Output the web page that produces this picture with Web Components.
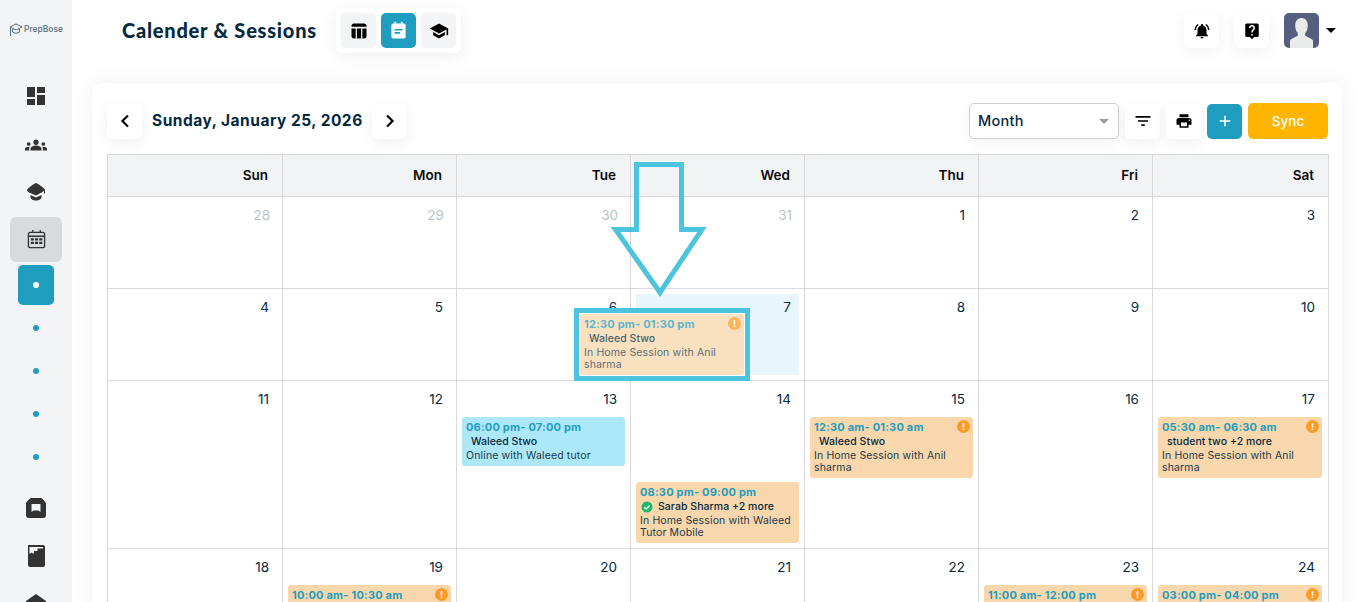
<!DOCTYPE html>
<html lang="en">
<head>
<meta charset="utf-8">
<title>Calender & Sessions</title>
<style>
  html, body { margin: 0; height: 100%; overflow: hidden; background: #fff; }
  body { font-family: Inter, "Liberation Sans", sans-serif; color: #05293f; }
</style>
</head>
<body>
<prep-app>
  <prep-sidebar slot="sidebar"></prep-sidebar>
  <prep-header slot="header" heading="Calender & Sessions"></prep-header>
  <cal-card slot="content">
    <cal-toolbar slot="toolbar" label="Sunday, January 25, 2026"></cal-toolbar>
    <cal-grid>
      <cal-day date="28" muted></cal-day><cal-day date="29" muted></cal-day><cal-day date="30" muted></cal-day><cal-day date="31" muted></cal-day><cal-day date="1"></cal-day><cal-day date="2"></cal-day><cal-day date="3"></cal-day>
      <cal-day date="4"></cal-day><cal-day date="5"></cal-day><cal-day date="6"></cal-day><cal-day date="7" today></cal-day><cal-day date="8"></cal-day><cal-day date="9"></cal-day><cal-day date="10"></cal-day>
      <cal-day date="11"></cal-day><cal-day date="12"></cal-day>
      <cal-day date="13"><cal-event time="06:00 pm- 07:00 pm" who="Waleed Stwo" kind="online">Online with Waleed tutor</cal-event></cal-day>
      <cal-day date="14"><cal-event style="margin-top:70px" time="08:30 pm- 09:00 pm" who="Sarab Sharma +2 more" status="ok">In Home Session with Waleed Tutor Mobile</cal-event></cal-day>
      <cal-day date="15"><cal-event time="12:30 am- 01:30 am" who="Waleed Stwo" status="warn">In Home Session with Anil sharma</cal-event></cal-day>
      <cal-day date="16"></cal-day>
      <cal-day date="17"><cal-event style="margin-right:1px" time="05:30 am- 06:30 am" who="student two +2 more" status="warn">In Home Session with Anil sharma</cal-event></cal-day>
      <cal-day date="18"></cal-day>
      <cal-day date="19"><cal-event time="10:00 am- 10:30 am" who="" status="warn"></cal-event></cal-day>
      <cal-day date="20"></cal-day><cal-day date="21"></cal-day><cal-day date="22"></cal-day>
      <cal-day date="23"><cal-event time="11:00 am- 12:00 pm" who="" status="warn"></cal-event></cal-day>
      <cal-day date="24"><cal-event style="margin-right:1px" time="03:00 pm- 04:00 pm" who="" status="warn"></cal-event></cal-day>
    </cal-grid>
  </cal-card>
</prep-app>
<guide-overlay></guide-overlay>

<script>
const ICONS = {
  dashboard: '<path d="M3 13h8V3H3v10zm0 8h8v-6H3v6zm10 0h8V11h-8v10zm0-18v6h8V3h-8z"/>',
  groups: '<path transform="translate(0 1)" d="M12 12.75c1.63 0 3.07.39 4.24.9 1.08.48 1.76 1.56 1.76 2.73V18H6v-1.61c0-1.18.68-2.26 1.76-2.73 1.17-.52 2.61-.91 4.24-.91zM4 13c1.1 0 2-.9 2-2s-.9-2-2-2-2 .9-2 2 .9 2 2 2zm1.13 1.1c-.37-.06-.74-.1-1.13-.1-.99 0-1.93.21-2.78.58C.48 14.9 0 15.62 0 16.43V18h4.5v-1.61c0-.83.23-1.61.63-2.29zM20 13c1.1 0 2-.9 2-2s-.9-2-2-2-2 .9-2 2 .9 2 2 2zm4 3.43c0-.81-.48-1.53-1.22-1.85-.85-.37-1.79-.58-2.78-.58-.39 0-.76.04-1.13.1.4.68.63 1.46.63 2.29V18H24v-1.57zM12 6c1.66 0 3 1.34 3 3s-1.34 3-3 3-3-1.34-3-3 1.34-3 3-3z"/>',
  school: '<path d="M5 13.18v4L12 21l7-3.82v-4L12 17l-7-3.82zM12 3L1 9l11 6 9-4.91V17h2V9L12 3z"/>',
  cap: '<path d="M12 3c1 0 7.500 4.500 9 6.500v4h-1v-3l-1.500 1.500L12 15.500 5 12.500C3.500 11.500 3 10.500 3 10 3 8.500 11 3 12 3z"/><path d="M6.500 15l5.500 2.500 5.500-2.500v2c0 2-2.500 3.500-5.500 3.500S6.500 19 6.500 17z"/>',
  week: '<path d="M6 3h12a3 3 0 0 1 3 3v1H3V6a3 3 0 0 1 3-3zM3 9h5v12H6a3 3 0 0 1-3-3zm6.500 0h5v12h-5zM16 9h5v9a3 3 0 0 1-3 3h-2z"/>',
  note: '<path fill-rule="evenodd" d="M7 1h2v2h6V1h2v2h2a2 2 0 0 1 2 2v15a2 2 0 0 1-2 2H5a2 2 0 0 1-2-2V5a2 2 0 0 1 2-2h2zM7 10v2h10v-2zm0 4v2h7v-2z"/>',
  bell: '<path d="M7.58 4.08L6.15 2.65C3.75 4.48 2.17 7.3 2.03 10.5h2c.15-2.65 1.51-4.97 3.55-6.42zm12.39 6.42h2c-.15-3.2-1.73-6.02-4.12-7.85l-1.42 1.43c2.02 1.45 3.39 3.77 3.54 6.42zM18 11c0-3.07-1.64-5.64-4.5-6.32V4c0-.83-.67-1.5-1.5-1.5s-1.5.67-1.5 1.5v.68C7.63 5.36 6 7.92 6 11v5l-2 2v1h16v-1l-2-2v-5zm-6 11c.14 0 .27-.01.4-.04.65-.14 1.18-.58 1.44-1.18.1-.24.15-.5.15-.78h-4c.01 1.1.9 2 2.01 2z"/>',
  help: '<path d="M19 2H5c-1.11 0-2 .9-2 2v14c0 1.1.89 2 2 2h4l3 3 3-3h4c1.1 0 2-.9 2-2V4c0-1.1-.9-2-2-2zm-6 16h-2v-2h2v2zm2.07-7.75l-.9.92C13.45 11.9 13 12.5 13 14h-2v-.5c0-1.1.45-2.1 1.17-2.83l1.24-1.26c.37-.36.59-.86.59-1.41 0-1.1-.9-2-2-2s-2 .9-2 2H8c0-2.21 1.79-4 4-4s4 1.79 4 4c0 .88-.36 1.68-.93 2.25z"/>',
  filter: '<path d="M10 18h4v-2h-4v2zM3 6v2h18V6H3zm3 7h12v-2H6v2z"/>',
  print: '<path d="M19 8H5c-1.66 0-3 1.34-3 3v6h4v4h12v-4h4v-6c0-1.66-1.34-3-3-3zm-3 11H8v-5h8v5zm3-7c-.55 0-1-.45-1-1s.45-1 1-1 1 .45 1 1-.45 1-1 1zm-1-9H6v4h12V3z"/>',
  left: '<path d="M17 5.500L15 3.600 6.500 12l8.500 8.400 2-1.900L10.600 12z"/>',
  right: '<path d="M7 5.500L9 3.600 17.500 12 9 20.400l-2-1.900 6.400-6.500z"/>',
  plus: '<path d="M11 5h2v6h6v2h-6v6h-2v-6H5v-2h6z"/>',
  calendar: '<path fill-rule="evenodd" d="M7 1h1.500v2h7V1H17v2h2a3 3 0 0 1 3 3v13a3 3 0 0 1-3 3H5a3 3 0 0 1-3-3V6a3 3 0 0 1 3-3h2zM5 4.500A1.500 1.500 0 0 0 3.500 6v1.500h17V6A1.500 1.500 0 0 0 19 4.500zM3.500 9v10A1.500 1.500 0 0 0 5 20.500h14a1.500 1.500 0 0 0 1.500-1.500V9z"/><path d="M5.500 10.500h3.500v2.500H5.500zm4.800 0h3.500v2.500h-3.500zm4.800 0h3.500v2.500h-3.500zM5.500 14.500h3.500V17H5.500zm4.800 0h3.500V17h-3.500zm4.800 0h3.500V17h-3.500z"/>',
  box: '<path fill-rule="evenodd" d="M7 2h10c2 1 5 4 5 6v11a3 3 0 0 1-3 3H5a3 3 0 0 1-3-3V8c0-2 3-5 5-6zm.500 6v8l2-1.500h5l2 1.500V8z"/>',
  book: '<path fill-rule="evenodd" d="M4 1h15a2 2 0 0 1 2 2v18a2 2 0 0 1-2 2H6a2 2 0 0 1-2-2zm1.500 2v7l2-1.500 2 1.500 .5-3h3.500V4.500h5.500V3z"/>',
  house: '<path d="M12 2l10 7v13H2V9z"/>'
};

class AppIcon extends HTMLElement {
  connectedCallback() {
    const size = this.getAttribute('size') || 24;
    this.attachShadow({ mode: 'open' }).innerHTML = `
      <style>
        :host { display: inline-flex; width: ${size}px; height: ${size}px; }
        svg { width: 100%; height: 100%; fill: currentColor; display: block; }
      </style>
      <svg viewBox="0 0 24 24">${ICONS[this.getAttribute('name')] || ''}</svg>`;
  }
}

class IconButton extends HTMLElement {
  connectedCallback() {
    const bg = this.getAttribute('bg') || '#fff';
    const color = this.getAttribute('color') || '#000';
    const shadow = this.hasAttribute('flat') ? 'none' : '0 4px 14px rgba(0,0,0,.06)';
    this.attachShadow({ mode: 'open' }).innerHTML = `
      <style>
        :host {
          display: flex; align-items: center; justify-content: center;
          width: 35px; height: 35px; border-radius: 5px;
          background: ${bg}; color: ${color}; box-shadow: ${shadow}; flex: none;
        }
      </style>
      <app-icon name="${this.getAttribute('name')}" size="${this.getAttribute('size') || 20}"></app-icon>`;
  }
}

class PrepApp extends HTMLElement {
  constructor() {
    super();
    this.attachShadow({ mode: 'open' }).innerHTML = `
      <style>
        :host { display: flex; height: 100vh; overflow: hidden; }
        .side { width: 72px; flex: none; }
        .main { flex: 1; min-width: 0; display: flex; flex-direction: column; }
        .body { padding: 0 16px 0 20px; }
      </style>
      <div class="side"><slot name="sidebar"></slot></div>
      <div class="main">
        <slot name="header"></slot>
        <div class="body"><slot name="content"></slot></div>
      </div>`;
  }
}

class PrepSidebar extends HTMLElement {
  constructor() {
    super();
    const icon = (name, size, cls = '') => `<div class="row ${cls}"><app-icon name="${name}" size="${size}"></app-icon></div>`;
    this.attachShadow({ mode: 'open' }).innerHTML = `
      <style>
        :host {
          display: flex; flex-direction: column; align-items: center;
          height: 100vh; background: #f3f4f6; color: #333; overflow: hidden;
        }
        .logo {
          height: 72px; width: 100%; flex: none; padding-top: 22px; box-sizing: border-box;
          display: flex; justify-content: center; gap: 1px; color: #54707f;
          font: 500 8.5px Inter, sans-serif;
        }
        .logo svg { width: 14px; height: 16px; fill: none; stroke: #54707f; stroke-width: 1; }
        .logo span { line-height: 15px; }
        .row { width: 52px; height: 48px; flex: none; display: flex; align-items: center; justify-content: center; }
        .row.active { height: 45px; margin-top: 1px; background: #d9dadc; border-radius: 6px; }
        .row.gap { margin-top: 7px; }
        .sub {
          width: 36px; height: 40px; margin-top: 3px; flex: none; border-radius: 5px;
          display: flex; align-items: center; justify-content: center;
        }
        .sub i { width: 6px; height: 6px; border-radius: 50%; background: #1f9dbf; }
        .sub.on { background: #1f9dbf; }
        .sub.on i { background: #fff; }
      </style>
      <div class="logo">
        <svg viewBox="0 0 14 16"><path d="M1 5l6-3 6 3-6 3zM3.500 7v3c2 1.500 5 1.500 7 0V7M1.500 5.500V14"/></svg>
        <span>PrepBose</span>
      </div>
      ${icon('dashboard', 24)}${icon('groups', 22)}${icon('cap', 24)}${icon('calendar', 21, 'active')}
      <div class="sub on"><i></i></div>
      <div class="sub"><i></i></div><div class="sub"><i></i></div><div class="sub"><i></i></div><div class="sub"><i></i></div>
      ${icon('box', 24, 'gap')}${icon('book', 24)}${icon('house', 24)}`;
  }
}

class PrepHeader extends HTMLElement {
  connectedCallback() {
    this.attachShadow({ mode: 'open' }).innerHTML = `
      <style>
        :host { display: flex; align-items: flex-start; height: 83px; flex: none; padding-left: 50px; }
        h1 {
          margin: 0; width: 214px; flex: none; height: 61px;
          font: 900 20px/61px Lato, sans-serif; letter-spacing: .77px; color: #05293f;
        }
        .tabs {
          display: flex; gap: 5px; padding: 5px; margin-top: 8px; border-radius: 6px;
          background: #fff; box-shadow: 0 4px 16px rgba(0,0,0,.07);
        }
        .end { margin-left: auto; margin-top: 13px; margin-right: 22px; display: flex; align-items: center; gap: 15px; }
        .avatar { width: 35px; height: 35px; border-radius: 5px; background: #565f7f; overflow: hidden; }
        .avatar svg { display: block; width: 35px; height: 35px; }
        .user { display: flex; align-items: center; gap: 7px; }
        .caret { width: 0; height: 0; border: 5px solid transparent; border-top: 5px solid #000; border-bottom: 0; }
      </style>
      <h1>${this.getAttribute('heading').replace('&', '&amp;')}</h1>
      <div class="tabs">
        <icon-button name="week" bg="#f3f4f6" flat></icon-button>
        <icon-button name="note" size="19" bg="#1f9dbf" color="#fff" flat></icon-button>
        <icon-button name="school" bg="#f3f4f6" flat></icon-button>
      </div>
      <div class="end">
        <icon-button name="bell" size="18"></icon-button>
        <icon-button name="help" size="18"></icon-button>
        <div class="user">
          <div class="avatar"><svg viewBox="0 0 35 35"><path fill="#e8ebea" d="M17.500 5c3.900 0 6.300 3 6.300 7.500 0 3.300-1.100 6-2.600 7.600v2.400c1 1.300 5.800 2.500 7.800 5V35H6v-7.500c2-2.500 6.800-3.700 7.800-5v-2.400c-1.500-1.600-2.600-4.300-2.600-7.600C11.200 8 13.600 5 17.500 5z"/></svg></div>
          <span class="caret"></span>
        </div>
      </div>`;
  }
}

class CalCard extends HTMLElement {
  constructor() {
    super();
    this.attachShadow({ mode: 'open' }).innerHTML = `
      <style>
        :host {
          display: block; padding: 20px 14px 0 15px; border-radius: 10px; background: #fff;
          box-shadow: 0 0 24px rgba(0,0,0,.06); height: 600px; box-sizing: border-box;
        }
      </style>
      <slot name="toolbar"></slot>
      <slot></slot>`;
  }
}

class CalToolbar extends HTMLElement {
  connectedCallback() {
    this.attachShadow({ mode: 'open' }).innerHTML = `
      <style>
        :host { display: flex; align-items: center; height: 36px; margin-bottom: 15px; }
        h2 { margin: 0 10px; padding-bottom: 2px; font: 700 15.5px Inter, sans-serif; letter-spacing: .5px; color: #05293f; width: 210px; white-space: nowrap; }
        .right { margin-left: auto; display: flex; gap: 6px; align-items: center; }
        .select {
          width: 150px; height: 36px; box-sizing: border-box; padding: 0 8px; margin-right: 0;
          border: 1px solid #ccc; border-radius: 5px; display: flex; align-items: center; justify-content: space-between;
          font: 500 14.5px Inter, sans-serif; letter-spacing: .3px; color: #05293f; background: #fff;
          box-shadow: 0 4px 14px rgba(0,0,0,.05);
        }
        .select span { padding-bottom: 1px; }
        .select i { border: 5px solid transparent; border-top: 5px solid #999; border-bottom: 0; margin-right: 1px; }
        .sync {
          width: 80px; height: 36px; border-radius: 5px; background: #ffb400; color: #fff;
          display: flex; align-items: center; justify-content: center; font: 500 13.5px Inter, sans-serif;
        }
      </style>
      <icon-button name="left" size="18"></icon-button>
      <h2>${this.getAttribute('label')}</h2>
      <icon-button name="right" size="18"></icon-button>
      <div class="right">
        <div class="select"><span>Month</span><i></i></div>
        <icon-button name="filter" size="20"></icon-button>
        <icon-button name="print" size="18"></icon-button>
        <icon-button name="plus" size="18" bg="#1f9dbf" color="#fff" flat></icon-button>
        <div class="sync">Sync</div>
      </div>`;
  }
}

class CalGrid extends HTMLElement {
  constructor() {
    super();
    const days = ['Sun', 'Mon', 'Tue', 'Wed', 'Thu', 'Fri', 'Sat'];
    this.attachShadow({ mode: 'open' }).innerHTML = `
      <style>
        :host {
          display: grid;
          grid-template-columns: 175px repeat(5, 174px) 176px;
          grid-template-rows: 42px 92px 92px 168px 168px;
          border-left: 1px solid #d8d8dc; border-top: 1px solid #d8d8dc;
          width: 1222px; box-sizing: border-box;
        }
        .head {
          background: #f2f3f5; border-right: 1px solid #d8d8dc; border-bottom: 1px solid #d8d8dc;
          display: flex; align-items: center; justify-content: flex-end; padding: 0 14px 2px 0;
          font: 600 13.5px Inter, sans-serif; color: #0a0a0a;
        }
      </style>
      ${days.map(d => `<div class="head">${d}</div>`).join('')}
      <slot></slot>`;
  }
}

class CalDay extends HTMLElement {
  connectedCallback() {
    const muted = this.hasAttribute('muted');
    const today = this.hasAttribute('today');
    this.attachShadow({ mode: 'open' }).innerHTML = `
      <style>
        :host {
          display: block; box-sizing: border-box; min-width: 0;
          border-right: 1px solid #d8d8dc; border-bottom: 1px solid #d8d8dc;
          padding: 5px 5px 0;
        }
        .tint { height: 81px; background: ${today ? '#e8f5fb' : 'transparent'}; }
        .num {
          height: 26px; text-align: right; padding-right: ${muted ? 7 : 8}px;
          font: 400 13.5px/26px Inter, sans-serif; color: ${muted ? '#b9c3c8' : '#05293f'};
        }
        .events { margin-top: 5px; }
      </style>
      <div class="${today ? 'tint' : ''}">
        <div class="num">${this.getAttribute('date')}</div>
        <div class="events"><slot></slot></div>
      </div>`;
  }
}

class CalEvent extends HTMLElement {
  connectedCallback() {
    const status = this.getAttribute('status');
    const online = this.getAttribute('kind') === 'online';
    const mark = status === 'warn' ? '<span class="warn">!</span>' : '';
    const check = status === 'ok'
      ? '<svg class="check" viewBox="0 0 12 12"><circle cx="6" cy="6" r="5.500" fill="#1fb866"/><path d="M3.300 6.200l1.900 1.900 3.500-3.600" fill="none" stroke="#fff" stroke-width="1.400"/></svg>'
      : '';
    this.attachShadow({ mode: 'open' }).innerHTML = `
      <style>
        :host {
          display: block; position: relative; box-sizing: border-box; padding: 3px 4px 4px;
          border-radius: 3px; background: ${online ? '#ade8f8' : '#f8d7ac'}; color: #1c3a4a;
          font-family: Inter, sans-serif;
        }
        .time { font-weight: 700; font-size: 11px; line-height: 14px; color: #1f9dbf; letter-spacing: .2px; white-space: nowrap; }
        .who { display: flex; align-items: center; gap: 5px; padding-left: 5px; height: 14px; margin-top: 1px; font-weight: 500; font-size: 10.5px; line-height: 14px; color: #05293f; white-space: nowrap; letter-spacing: .05px; }
        .who.has-check { padding-left: 1px; }
        .check { width: 12px; height: 12px; flex: none; }
        .desc { margin-top: 1px; font-size: 10.5px; line-height: 12px; letter-spacing: .14px; }
        .warn {
          position: absolute; top: 3px; right: 3px; width: 13px; height: 13px; border-radius: 50%;
          background: #fb9b27; color: #fff; font: 700 9px/13px Inter, sans-serif; text-align: center;
        }
      </style>
      ${mark}
      <div class="time">${this.getAttribute('time')}</div>
      <div class="who ${status === 'ok' ? 'has-check' : ''}">${check}<span>${this.getAttribute('who')}</span></div>
      <div class="desc"><slot></slot></div>`;
  }
}

// annotation drawn over the page: the arrow and the boxed session
class GuideOverlay extends HTMLElement {
  constructor() {
    super();
    this.attachShadow({ mode: 'open' }).innerHTML = `
      <style>
        :host { position: absolute; inset: 0; display: block; pointer-events: none; }
        svg { position: absolute; left: 0; top: 0; width: 1358px; height: 602px; }
        .box {
          position: absolute; left: 574px; top: 308px; width: 176px; height: 73px; box-sizing: border-box;
          border: 5px solid #4cc4de; background: #fff; padding: 1px;
        }
        .box cal-event { height: 100%; opacity: .75; margin-top: 0; }
      </style>
      <svg viewBox="0 0 1358 602"><path d="M636.500 164.500H681.500V229.500H702L660 292.500 615.500 229.500H636.500Z" fill="none" stroke="#4cc4de" stroke-width="5"/></svg>
      <div class="box"><cal-event time="12:30 pm- 01:30 pm" who="Waleed Stwo" status="warn">In Home Session with Anil sharma</cal-event></div>`;
  }
}

customElements.define('app-icon', AppIcon);
customElements.define('icon-button', IconButton);
customElements.define('cal-event', CalEvent);
customElements.define('cal-day', CalDay);
customElements.define('cal-grid', CalGrid);
customElements.define('cal-toolbar', CalToolbar);
customElements.define('cal-card', CalCard);
customElements.define('prep-header', PrepHeader);
customElements.define('prep-sidebar', PrepSidebar);
customElements.define('prep-app', PrepApp);
customElements.define('guide-overlay', GuideOverlay);
</script>
</body>
</html>
